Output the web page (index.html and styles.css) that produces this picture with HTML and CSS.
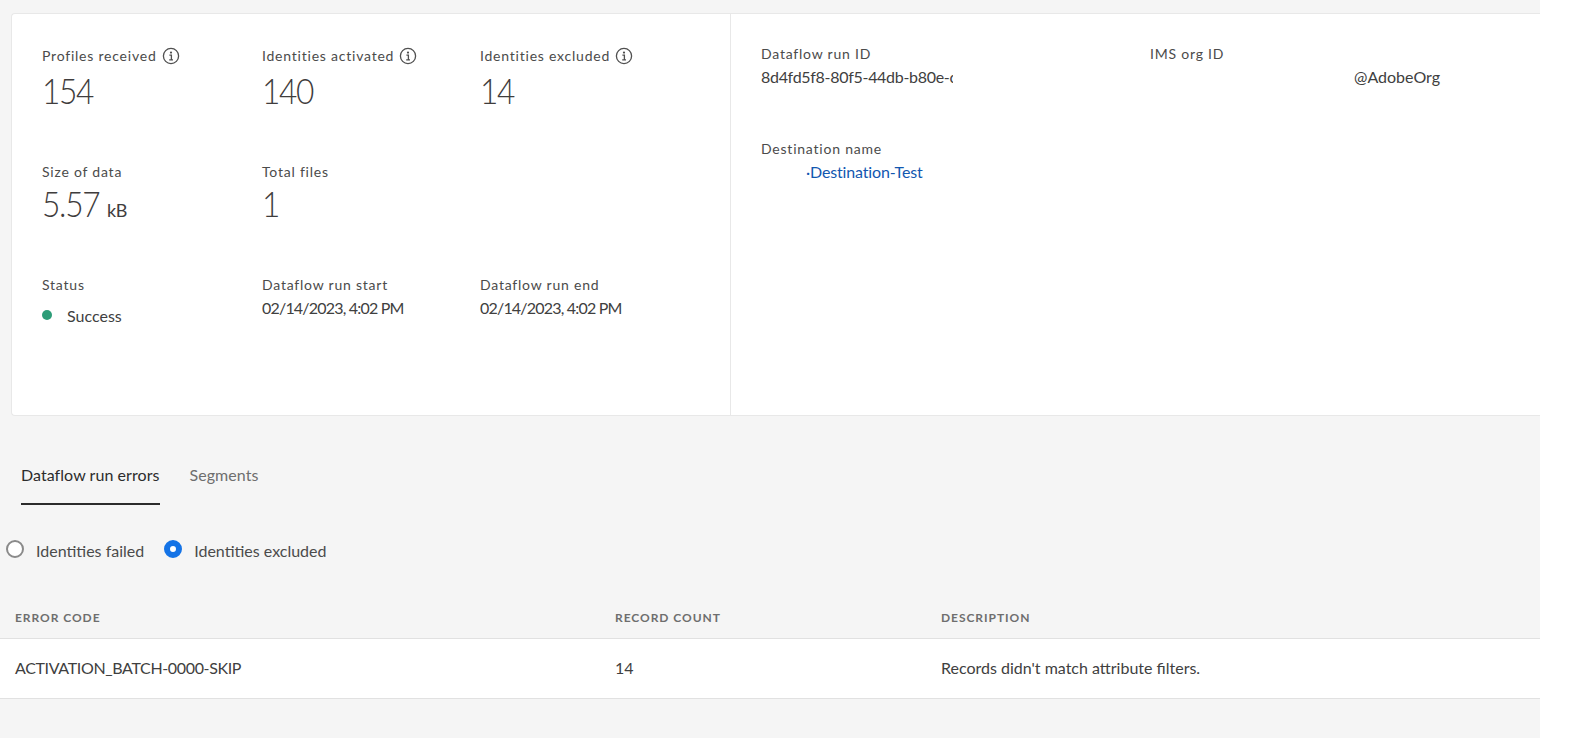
FILE: index.html
```html
<!DOCTYPE html>
<html lang="en">
<head>
<meta charset="utf-8">
<title>Dataflow run details</title>
<link rel="stylesheet" href="styles.css">
</head>
<body>
<div class="page">
  <section class="card">
    <div class="metrics">
      <div class="metric">
        <div class="label">Profiles received<svg class="info" viewBox="0 0 18 18"><circle cx="9" cy="9" r="7.6"/><circle class="dot" cx="9" cy="5.6" r="1.1"/><path d="M7.4 8.2H9.4V12.6M7.2 12.8H11"/></svg></div>
        <div class="big first"><span class="num">154</span></div>
      </div>
      <div class="metric">
        <div class="label">Identities activated<svg class="info" viewBox="0 0 18 18"><circle cx="9" cy="9" r="7.6"/><circle class="dot" cx="9" cy="5.6" r="1.1"/><path d="M7.4 8.2H9.4V12.6M7.2 12.8H11"/></svg></div>
        <div class="big first"><span class="num">140</span></div>
      </div>
      <div class="metric">
        <div class="label">Identities excluded<svg class="info" viewBox="0 0 18 18"><circle cx="9" cy="9" r="7.6"/><circle class="dot" cx="9" cy="5.6" r="1.1"/><path d="M7.4 8.2H9.4V12.6M7.2 12.8H11"/></svg></div>
        <div class="big first"><span class="num">14</span></div>
      </div>
      <div class="metric">
        <div class="label">Size of data</div>
        <div class="big"><span class="num">5.57</span><span class="unit">kB</span></div>
      </div>
      <div class="metric">
        <div class="label">Total files</div>
        <div class="big"><span class="num">1</span></div>
      </div>
      <div class="metric"></div>
      <div class="metric">
        <div class="label">Status</div>
        <div class="status"><span class="status-dot"></span>Success</div>
      </div>
      <div class="metric">
        <div class="label">Dataflow run start</div>
        <div class="value date">02/14/2023, 4:02 PM</div>
      </div>
      <div class="metric">
        <div class="label">Dataflow run end</div>
        <div class="value date">02/14/2023, 4:02 PM</div>
      </div>
    </div>
    <div class="details">
      <div class="detail">
        <div class="label">Dataflow run ID</div>
        <div class="value run-id">8d4fd5f8-80f5-44db-b80e-c</div>
      </div>
      <div class="detail">
        <div class="label">IMS org ID</div>
        <div class="value org-id">@AdobeOrg</div>
      </div>
      <div class="detail">
        <div class="label">Destination name</div>
        <div class="value dest"><a href="#">·Destination-Test</a></div>
      </div>
    </div>
  </section>

  <nav class="tabs">
    <span class="tab active">Dataflow run errors</span>
    <span class="tab">Segments</span>
  </nav>

  <div class="radios">
    <span class="radio"><span class="circle"></span>Identities failed</span>
    <span class="radio"><span class="circle on"></span>Identities excluded</span>
  </div>

  <div class="table">
    <div class="row head">
      <div>Error code</div>
      <div>Record count</div>
      <div>Description</div>
    </div>
    <div class="row body">
      <div class="code">ACTIVATION_BATCH-0000-SKIP</div>
      <div>14</div>
      <div>Records didn't match attribute filters.</div>
    </div>
  </div>
</div>
</body>
</html>
```
FILE: styles.css
```css
* { box-sizing: border-box; }
html, body { margin: 0; height: 100%; background: #fff; overflow: hidden; }
body { font-family: "Lato", "Open Sans", sans-serif; color: #3f3d3d; }

.page {
  width: 1540px;
  height: 738px;
  background: #f5f5f5;
  padding-top: 13px;
  overflow: hidden;
}

.card {
  margin-left: 11px;
  width: 1529px;
  height: 403px;
  background: #fff;
  border: 1px solid #e8e8e8;
  border-right: 0;
  border-radius: 4px 0 0 4px;
  display: flex;
}

.metrics {
  width: 719px;
  flex: none;
  padding: 33px 0 0 30px;
  display: grid;
  grid-template-columns: 220px 218px 200px;
  grid-template-rows: 116px 113px auto;
  align-content: start;
  border-right: 1px solid #e8e8e8;
}

.label {
  font-size: 14px;
  line-height: 18px;
  letter-spacing: 0.78px;
  color: #4b4b4b;
  display: flex;
  align-items: center;
  gap: 5px;
  white-space: pre;
}

.info {
  width: 18px;
  height: 18px;
  fill: none;
  stroke: #505050;
  stroke-width: 1.3;
}
.info .dot { fill: #505050; stroke: none; }

.big {
  font-weight: 300;
  font-size: 36px;
  line-height: 44px;
  color: #3f3d3d;
}
.big.first { margin-top: 3px; }
.num {
  display: inline-block;
  letter-spacing: -1.5px;
  transform: scaleX(0.88);
  transform-origin: left center;
}
.unit {
  font-size: 18px;
  font-weight: 400;
  letter-spacing: -0.4px;
}

.value {
  font-size: 16px;
  line-height: 22px;
  margin-top: 3px;
  color: #404040;
  white-space: nowrap;
}
.date { letter-spacing: -0.8px; }

.status {
  display: flex;
  align-items: center;
  font-size: 16px;
  line-height: 22px;
  margin-top: 11px;
  color: #404040;
}
.status-dot {
  width: 10px;
  height: 10px;
  border-radius: 50%;
  background: #2d9d78;
  margin-right: 15px;
  margin-top: -2px;
}

.details {
  flex: 1;
  padding: 31px 0 0 30px;
  display: grid;
  grid-template-columns: 389px 1fr;
  grid-template-rows: 95px auto;
  align-content: start;
}
.run-id { width: 192px; overflow: hidden; letter-spacing: -0.3px; }
.org-id { padding-left: 204px; }
.dest { padding-left: 45px; letter-spacing: -0.15px; }
.dest a { color: #1257b0; text-decoration: none; }

.tabs {
  display: flex;
  gap: 30px;
  margin: 42px 0 0 21px;
}
.tab {
  font-size: 16px;
  line-height: 22px;
  padding: 6px 0 17px;
  letter-spacing: 0.06px;
  color: #6e6e6e;
  border-bottom: 2px solid transparent;
}
.tab.active { color: #2c2c2c; border-bottom-color: #2c2c2c; }

.radios {
  display: flex;
  gap: 20px;
  margin: 34px 0 0 6px;
  height: 22px;
}
.radio {
  display: flex;
  align-items: center;
  gap: 12px;
  font-size: 16px;
  color: #4b4b4b;
}
.circle {
  width: 18px;
  height: 18px;
  border-radius: 50%;
  border: 2px solid #8a8a8a;
  background: #fff;
  margin-top: -3px;
}
.circle.on { border: 6.5px solid #1473e6; }

.table { margin-top: 45px; }
.row {
  display: grid;
  grid-template-columns: 600px 326px 1fr;
  align-items: center;
  padding-left: 15px;
}
.head {
  height: 33px;
  padding-bottom: 10px;
  font-size: 12px;
  font-weight: 700;
  letter-spacing: 0.95px;
  text-transform: uppercase;
  color: #6e6e6e;
  border-bottom: 1px solid #e1e1e1;
}
.body {
  height: 60px;
  padding-bottom: 2px;
  background: #fff;
  font-size: 16px;
  color: #404040;
  border-bottom: 1px solid #e1e1e1;
}
.code { letter-spacing: -0.35px; }
```
